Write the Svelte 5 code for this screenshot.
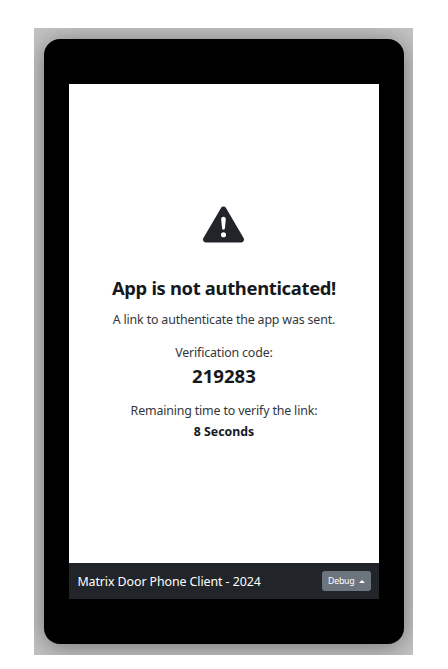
<script>
  const code = '219283';
  const seconds = 8;
</script>

<main class="backdrop">
  <div class="device">
    <div class="screen">
      <section class="content">
        <svg class="warning" viewBox="0 0 16 16" aria-hidden="true">
          <path d="M8.982 1.566a1.13 1.13 0 0 0-1.96 0L.165 13.233c-.457.778.091 1.767.98 1.767h13.713c.889 0 1.438-.99.98-1.767L8.982 1.566zM8 5c.535 0 .954.462.9.995l-.35 3.507a.552.552 0 0 1-1.1 0L7.1 5.995A.905.905 0 0 1 8 5zm.002 6a1 1 0 1 1 0 2 1 1 0 0 1 0-2z" />
        </svg>
        <h1>App is not authenticated!</h1>
        <p class="message">A link to authenticate the app was sent.</p>
        <p class="label">Verification code:</p>
        <strong class="code">{code}</strong>
        <p class="remaining">Remaining time to verify the link:</p>
        <strong class="time">{seconds} Seconds</strong>
      </section>
      <footer>
        <span class="brand">Matrix Door Phone Client - 2024</span>
        <button type="button">Debug <i class="caret"></i></button>
      </footer>
    </div>
  </div>
</main>

<style>
  :global(body) {
    margin: 0;
    background: #fff;
  }
  .backdrop {
    box-sizing: border-box;
    width: 379px;
    height: 627px;
    margin: 28px 0 0 34px;
    padding: 11px 9px 11px 10px;
    background: #c4c4c4;
    overflow: hidden;
    font-family: 'Noto Sans', 'Open Sans', sans-serif;
    color: #212529;
  }
  .device {
    box-sizing: border-box;
    height: 605px;
    padding: 45px 25.5px 45px 25.4px;
    border-radius: 16px;
    background: #000;
    box-shadow: 0 3px 26px rgba(0, 0, 0, 0.42);
  }
  .screen {
    display: flex;
    flex-direction: column;
    height: 515px;
    background: #fff;
  }
  .content {
    flex: 1;
    display: flex;
    flex-direction: column;
    align-items: center;
    white-space: nowrap;
  }
  .warning {
    width: 41px;
    height: 41px;
    margin-top: 120px;
    fill: #212529;
  }
  h1,
  p {
    margin: 0;
  }
  h1 {
    margin-top: 29px;
    height: 28px;
    line-height: 28px;
    font-size: 18.4px;
    letter-spacing: -0.32px;
    font-weight: 700;
    color: #15191d;
  }
  p {
    height: 20px;
    line-height: 20px;
    font-size: 12.4px;
    letter-spacing: -0.16px;
    color: #33373b;
  }
  .message {
    margin-top: 8px;
  }
  .label {
    margin-top: 13px;
  }
  .code {
    height: 28px;
    line-height: 28px;
    font-size: 18.6px;
    margin-top: -1px;
    color: #15191d;
  }
  .remaining {
    margin-top: 11px;
  }
  .time {
    margin-top: 1px;
    height: 20px;
    line-height: 20px;
    font-size: 12.3px;
    color: #15191d;
  }
  footer {
    box-sizing: border-box;
    height: 36px;
    padding: 0 8px;
    display: flex;
    align-items: center;
    justify-content: space-between;
    background: #212529;
    color: #fff;
  }
  .brand {
    font-size: 12.4px;
    letter-spacing: -0.08px;
    white-space: nowrap;
  }
  button {
    box-sizing: border-box;
    width: 48.5px;
    height: 20px;
    padding: 0 6px;
    border: 0;
    border-radius: 3px;
    display: flex;
    align-items: center;
    justify-content: space-between;
    background: #6c757d;
    color: #fff;
    font: 8.8px 'Noto Sans', 'Open Sans', sans-serif;
    letter-spacing: -0.25px;
  }
  .caret {
    border: solid transparent;
    border-width: 0 3px 3px;
    border-bottom-color: #fff;
  }
</style>
